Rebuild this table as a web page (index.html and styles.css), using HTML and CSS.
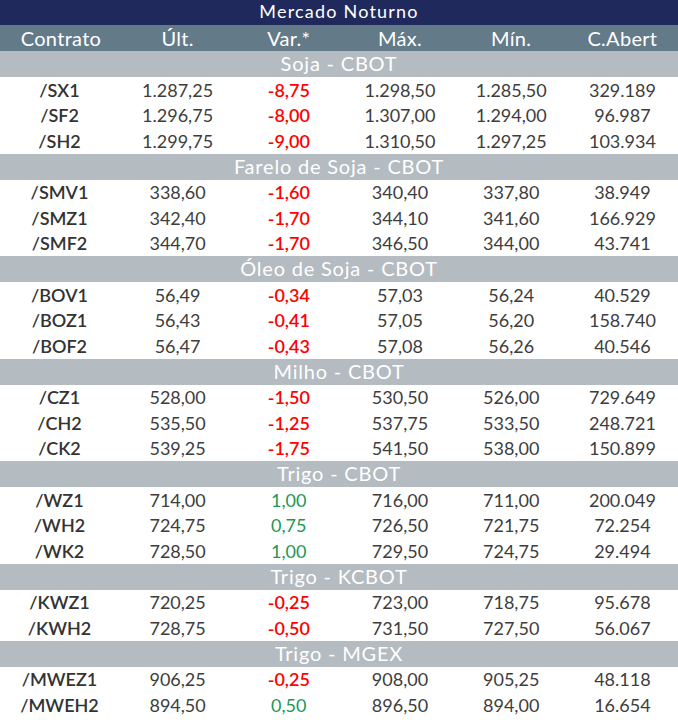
FILE: index.html
```html
<!DOCTYPE html>
<html lang="pt-BR">
<head>
<meta charset="utf-8">
<title>Mercado Noturno</title>
<link rel="stylesheet" href="styles.css">
</head>
<body>
<div class="board">
  <div class="title">Mercado Noturno</div>
  <div class="row head">
    <div>Contrato</div><div>Últ.</div><div>Var.*</div><div>Máx.</div><div>Mín.</div><div>C.Abert</div>
  </div>

  <div class="section">Soja - CBOT</div>
  <div class="row data"><div class="sym">/SX1</div><div>1.287,25</div><div class="neg">-8,75</div><div>1.298,50</div><div>1.285,50</div><div>329.189</div></div>
  <div class="row data"><div class="sym">/SF2</div><div>1.296,75</div><div class="neg">-8,00</div><div>1.307,00</div><div>1.294,00</div><div>96.987</div></div>
  <div class="row data"><div class="sym">/SH2</div><div>1.299,75</div><div class="neg">-9,00</div><div>1.310,50</div><div>1.297,25</div><div>103.934</div></div>

  <div class="section">Farelo de Soja - CBOT</div>
  <div class="row data"><div class="sym">/SMV1</div><div>338,60</div><div class="neg">-1,60</div><div>340,40</div><div>337,80</div><div>38.949</div></div>
  <div class="row data"><div class="sym">/SMZ1</div><div>342,40</div><div class="neg">-1,70</div><div>344,10</div><div>341,60</div><div>166.929</div></div>
  <div class="row data"><div class="sym">/SMF2</div><div>344,70</div><div class="neg">-1,70</div><div>346,50</div><div>344,00</div><div>43.741</div></div>

  <div class="section">Óleo de Soja - CBOT</div>
  <div class="row data"><div class="sym">/BOV1</div><div>56,49</div><div class="neg">-0,34</div><div>57,03</div><div>56,24</div><div>40.529</div></div>
  <div class="row data"><div class="sym">/BOZ1</div><div>56,43</div><div class="neg">-0,41</div><div>57,05</div><div>56,20</div><div>158.740</div></div>
  <div class="row data"><div class="sym">/BOF2</div><div>56,47</div><div class="neg">-0,43</div><div>57,08</div><div>56,26</div><div>40.546</div></div>

  <div class="section">Milho - CBOT</div>
  <div class="row data"><div class="sym">/CZ1</div><div>528,00</div><div class="neg">-1,50</div><div>530,50</div><div>526,00</div><div>729.649</div></div>
  <div class="row data"><div class="sym">/CH2</div><div>535,50</div><div class="neg">-1,25</div><div>537,75</div><div>533,50</div><div>248.721</div></div>
  <div class="row data"><div class="sym">/CK2</div><div>539,25</div><div class="neg">-1,75</div><div>541,50</div><div>538,00</div><div>150.899</div></div>

  <div class="section">Trigo - CBOT</div>
  <div class="row data"><div class="sym">/WZ1</div><div>714,00</div><div class="pos">1,00</div><div>716,00</div><div>711,00</div><div>200.049</div></div>
  <div class="row data"><div class="sym">/WH2</div><div>724,75</div><div class="pos">0,75</div><div>726,50</div><div>721,75</div><div>72.254</div></div>
  <div class="row data"><div class="sym">/WK2</div><div>728,50</div><div class="pos">1,00</div><div>729,50</div><div>724,75</div><div>29.494</div></div>

  <div class="section">Trigo - KCBOT</div>
  <div class="row data"><div class="sym">/KWZ1</div><div>720,25</div><div class="neg">-0,25</div><div>723,00</div><div>718,75</div><div>95.678</div></div>
  <div class="row data"><div class="sym">/KWH2</div><div>728,75</div><div class="neg">-0,50</div><div>731,50</div><div>727,50</div><div>56.067</div></div>

  <div class="section">Trigo - MGEX</div>
  <div class="row data"><div class="sym">/MWEZ1</div><div>906,25</div><div class="neg">-0,25</div><div>908,00</div><div>905,25</div><div>48.118</div></div>
  <div class="row data"><div class="sym">/MWEH2</div><div>894,50</div><div class="pos">0,50</div><div>896,50</div><div>894,00</div><div>16.654</div></div>
</div>
</body>
</html>
```

FILE: styles.css
```css
html, body {
  margin: 0;
  padding: 0;
  background: #ffffff;
}

body {
  font-family: Lato, "Noto Sans", "Liberation Sans", sans-serif;
  color: #3f3f3f;
}

.board {
  width: 678px;
}

.title {
  height: 25px;
  line-height: 22px;
  background: #1f295c;
  color: #ffffff;
  text-align: center;
  font-size: 18px;
  letter-spacing: 1.2px;
}

.row {
  display: grid;
  grid-template-columns: 122px repeat(5, 1fr);
  align-items: center;
  text-align: center;
}

.head {
  height: 26px;
  background: #637a89;
  color: #ffffff;
  font-size: 20px;
  letter-spacing: 0.3px;
}

.section {
  height: 26px;
  line-height: 25px;
  background: #b4bbc1;
  color: #ffffff;
  text-align: center;
  font-size: 20px;
  letter-spacing: 0.8px;
}

.data {
  height: 25.5px;
  font-size: 18px;
  line-height: 24px;
  color: #3d3d3d;
}

.data .sym {
  font-weight: 600;
  color: #333333;
  padding-right: 3px;
}

.data .neg {
  color: #ff0000;
  font-weight: 600;
}

.data .pos {
  color: #1e9656;
  font-weight: 400;
}
```
